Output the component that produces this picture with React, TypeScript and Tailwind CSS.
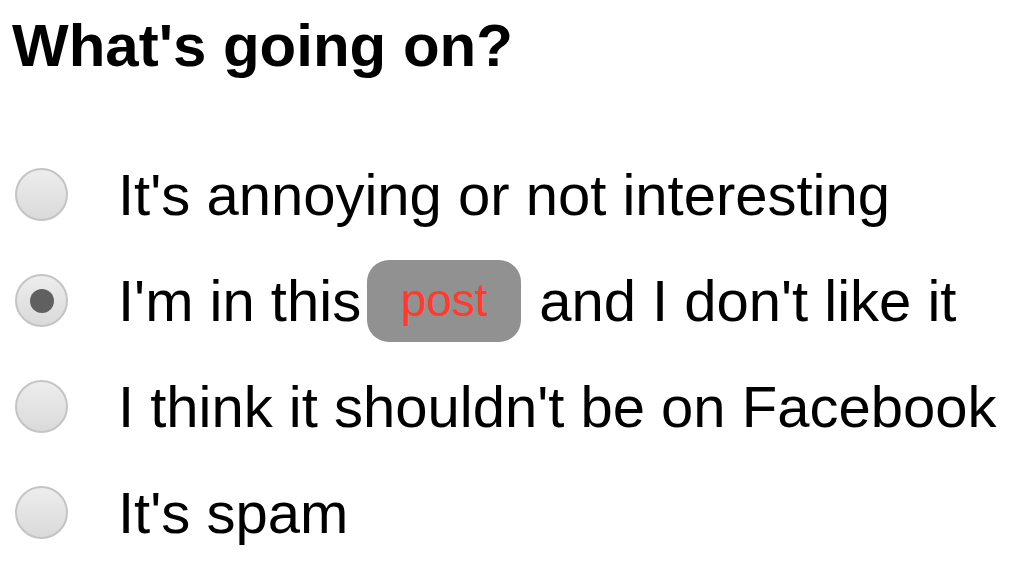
const options = [
  "It's annoying or not interesting",
  "I'm in this",
  "I think it shouldn't be on Facebook",
  "It's spam",
];

function Radio({ checked }: { checked?: boolean }) {
  return (
    <span className="flex h-[53px] w-[53px] shrink-0 items-center justify-center rounded-full border-2 border-[#c4c4c4] bg-gradient-to-b from-[#ededed] to-[#dadada]">
      {checked && <span className="h-[24px] w-[24px] rounded-full bg-[#606060]" />}
    </span>
  );
}

export default function App() {
  return (
    <div className="h-[579px] w-[1024px] bg-white font-['Liberation_Sans',Arial,sans-serif] text-black">
      <h1 className="pl-[12px] pt-[11px] text-[60px] font-bold leading-[70px]">What's going on?</h1>
      <div className="mt-[87px] flex flex-col gap-[53px]">
        {options.map((label, i) => (
          <div key={i} className="flex h-[53px] items-center pl-[15px]">
            <Radio checked={i === 1} />
            <span className="ml-[50px] whitespace-nowrap text-[58px] leading-none">{label}</span>
            {i === 1 && (
              <>
                <span className="ml-[6px] flex h-[82px] w-[154px] items-center justify-center rounded-[22px] bg-[#919191] text-[46px] text-[#ff3b30]">
                  post
                </span>
                <span className="ml-[18px] whitespace-nowrap text-[58px] leading-none">and I don't like it</span>
              </>
            )}
          </div>
        ))}
      </div>
    </div>
  );
}
